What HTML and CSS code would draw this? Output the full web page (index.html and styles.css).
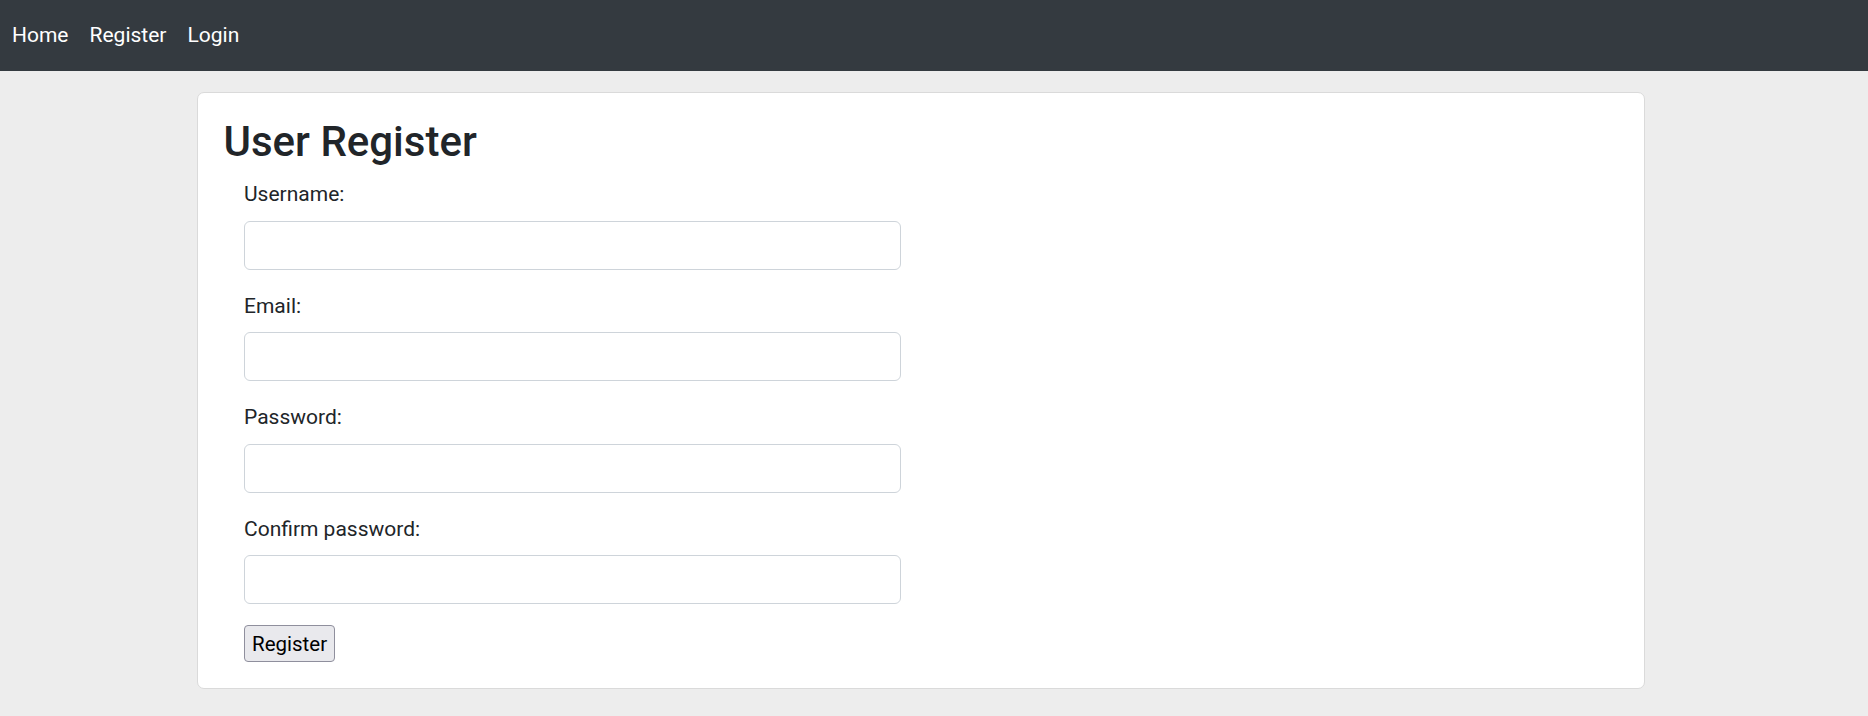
FILE: index.html
```html
<!DOCTYPE html>
<html lang="en">
<head>
<meta charset="utf-8">
<title>User Register</title>
<link rel="stylesheet" href="styles.css">
</head>
<body>
<nav class="navbar">
  <a class="nav-link" href="#">Home</a>
  <a class="nav-link" href="#">Register</a>
  <a class="nav-link" href="#">Login</a>
</nav>
<main class="page">
  <section class="card">
    <h1 class="title">User Register</h1>
    <form class="form">
      <div class="field">
        <label class="label" for="username">Username:</label>
        <input class="input" id="username" type="text">
      </div>
      <div class="field">
        <label class="label" for="email">Email:</label>
        <input class="input" id="email" type="email">
      </div>
      <div class="field">
        <label class="label" for="password">Password:</label>
        <input class="input" id="password" type="password">
      </div>
      <div class="field">
        <label class="label" for="confirm">Confirm password:</label>
        <input class="input" id="confirm" type="password">
      </div>
      <button class="btn" type="button">Register</button>
    </form>
  </section>
</main>
</body>
</html>
```

FILE: styles.css
```css
* { box-sizing: border-box; }

html, body {
  margin: 0;
  padding: 0;
}

body {
  background: #ededed;
  font-family: Roboto, "Liberation Sans", Arial, sans-serif;
  color: #212529;
}

.navbar {
  height: 71px;
  background: #343a40;
  display: flex;
  align-items: center;
  gap: 21px;
  padding: 0 12px;
}

.nav-link {
  color: #ffffff;
  text-decoration: none;
  font-size: 21px;
  line-height: 1.5;
}

.page {
  padding: 21px 0 0 197px;
}

.card {
  width: 1448px;
  background: #ffffff;
  border: 1px solid #dadada;
  border-radius: 7px;
  padding: 23.5px 24px 25.5px 25.5px;
}

.title {
  margin: 0 0 12.6px;
  font-size: 42px;
  font-weight: 500;
  line-height: 1.2;
}

.form {
  padding-left: 20.5px;
}

.field {
  margin-bottom: 21px;
}

.label {
  display: block;
  font-size: 21px;
  line-height: 1.5;
  margin-bottom: 10px;
}

.input {
  display: block;
  width: 657px;
  height: 49px;
  border: 1px solid #ced4da;
  border-radius: 6px;
  background: #ffffff;
  font-family: inherit;
  font-size: 20px;
  padding: 0 12px;
}

.btn {
  display: block;
  height: 37px;
  padding: 0 7px;
  margin-top: 21px;
  background: #e9e9ed;
  border: 1px solid #8f8f9d;
  border-radius: 4px;
  color: #000000;
  font-family: inherit;
  font-size: 20.5px;
}
```
